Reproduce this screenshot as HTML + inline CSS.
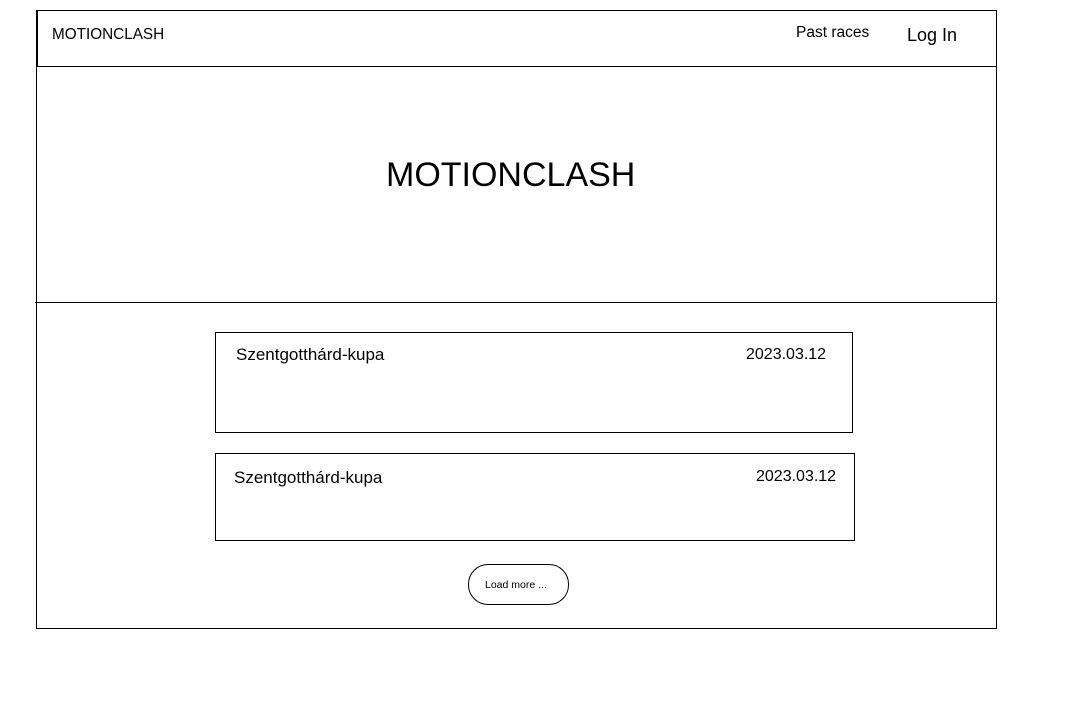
<!DOCTYPE html>
<html><head><meta charset="utf-8"><style>
body{margin:0;width:1067px;height:728px;background:#fff;position:relative;font-family:"Liberation Sans",sans-serif;color:#000;overflow:hidden}
.a{position:absolute;box-sizing:border-box}
.t{position:absolute;white-space:nowrap}
</style></head><body>
<div class="a" style="left:36px;top:10px;width:961px;height:619px;border:1px solid #000"></div>
<div class="a" style="left:36px;top:10px;width:961px;height:57px;border:1px solid #000;border-left:2px solid #000"></div>
<div class="a" style="left:35px;top:302px;width:962px;height:1px;background:#000"></div>
<div class="t" style="left:52px;top:26px;font-size:15.3px">MOTIONCLASH</div>
<div class="t" style="left:796px;top:24px;font-size:15.5px">Past races</div>
<div class="t" style="left:907px;top:25px;font-size:18px">Log In</div>
<div class="t" style="left:386px;top:156px;font-size:34px">MOTIONCLASH</div>
<div class="a" style="left:215px;top:332px;width:638px;height:101px;border:1px solid #000"></div>
<div class="t" style="left:236px;top:345px;font-size:17px">Szentgotthárd-kupa</div>
<div class="t" style="left:746px;top:346px;font-size:16px">2023.03.12</div>
<div class="a" style="left:215px;top:453px;width:640px;height:88px;border:1px solid #000"></div>
<div class="t" style="left:234px;top:468px;font-size:17px">Szentgotthárd-kupa</div>
<div class="t" style="left:756px;top:468px;font-size:16px">2023.03.12</div>
<div class="a" style="left:468px;top:564px;width:101px;height:41px;border:1px solid #000;border-radius:20px"></div>
<div class="t" style="left:485px;top:579px;font-size:10.5px">Load more ...</div>
</body></html>
